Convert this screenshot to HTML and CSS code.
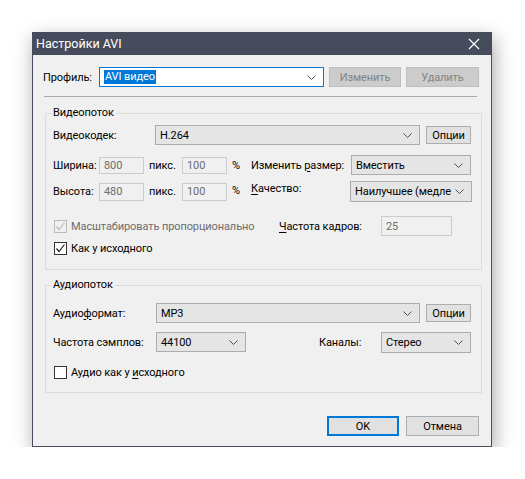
FILE: index.html
```html
<!DOCTYPE html>
<html lang="ru">
<head>
<meta charset="utf-8">
<title>Настройки AVI</title>
<link rel="stylesheet" href="styles.css">
</head>
<body>
<div class="dialog">
  <div class="titlebar">
    <span class="title">Настройки AVI</span>
    <svg class="close" width="12" height="12" viewBox="0 0 12 12"><path d="M1 1L11 11M11 1L1 11" stroke="#fff" stroke-width="1.2" fill="none"/></svg>
  </div>
  <div class="body">
    <div class="row profile-row">
      <span class="lbl w-profile">Профиль:</span>
      <div class="combo edit w-profile-combo"><span class="sel">AVI видео</span><svg class="chev" width="9" height="5" viewBox="0 0 9 5"><path d="M0.5 0.5L4.5 4.5L8.5 0.5" stroke="#505050" fill="none"/></svg></div>
      <button class="btn disabled w72">Изменить</button>
      <button class="btn disabled w73">Удалить</button>
    </div>
    <div class="separator"></div>

    <fieldset class="group video">
      <legend>Видеопоток</legend>
      <div class="row r1">
        <span class="lbl w-codec">Видеокодек:</span>
        <div class="combo w-codec-combo"><span>H.264</span><svg class="chev" width="9" height="5" viewBox="0 0 9 5"><path d="M0.5 0.5L4.5 4.5L8.5 0.5" stroke="#505050" fill="none"/></svg></div>
        <button class="btn opt">Опции</button>
      </div>
      <div class="row r2">
        <span class="lbl w-dim">Ширина:</span>
        <div class="input dis w45 h17">800</div>
        <span class="lbl w-px">пикс.</span>
        <div class="input dis w45 h17">100</div>
        <span class="lbl w-pct">%</span>
        <span class="lbl w-resize">Изменить <u>р</u>азмер:</span>
        <div class="combo w120"><span>Вместить</span><svg class="chev" width="9" height="5" viewBox="0 0 9 5"><path d="M0.5 0.5L4.5 4.5L8.5 0.5" stroke="#505050" fill="none"/></svg></div>
      </div>
      <div class="row r3">
        <span class="lbl w-dim">Высота:</span>
        <div class="input dis w45 h18">480</div>
        <span class="lbl w-px">пикс.</span>
        <div class="input dis w45 h18">100</div>
        <span class="lbl w-pct">%</span>
        <span class="lbl w-resize lbl-up"><u>К</u>ачество:</span>
        <div class="combo w122 h21"><span class="clip">Наилучшее (медленно)</span><svg class="chev" width="9" height="5" viewBox="0 0 9 5"><path d="M0.5 0.5L4.5 4.5L8.5 0.5" stroke="#505050" fill="none"/></svg></div>
      </div>
      <div class="row r4">
        <label class="check w-scale disabled"><span class="box"><svg width="11" height="11" viewBox="0 0 11 11"><path d="M1.5 5.5L4 8.5L9.5 1.5" stroke="#bcbcbc" stroke-width="1.2" fill="none"/></svg></span><span>Масштабировать пропорционально</span></label>
        <span class="lbl w-fps"><u>Ч</u>астота кадров:</span>
        <div class="input dis w71 h20">25</div>
      </div>
      <div class="row r5">
        <label class="check"><span class="box"><svg width="11" height="11" viewBox="0 0 11 11"><path d="M1.5 5.5L4 8.5L9.5 1.5" stroke="#222" stroke-width="1.2" fill="none"/></svg></span><span>Как у исходного</span></label>
      </div>
    </fieldset>

    <fieldset class="group audio">
      <legend>Аудиопоток</legend>
      <div class="row a1">
        <span class="lbl w-afmt">Аудио<u>ф</u>ормат:</span>
        <div class="combo w-afmt-combo"><span>MP3</span><svg class="chev" width="9" height="5" viewBox="0 0 9 5"><path d="M0.5 0.5L4.5 4.5L8.5 0.5" stroke="#505050" fill="none"/></svg></div>
        <button class="btn opt">Опции</button>
      </div>
      <div class="row a2">
        <span class="lbl w-afmt">Частота сэмплов:</span>
        <div class="combo w90 first"><span>44100</span><svg class="chev" width="9" height="5" viewBox="0 0 9 5"><path d="M0.5 0.5L4.5 4.5L8.5 0.5" stroke="#505050" fill="none"/></svg></div>
        <span class="lbl w-chan">Каналы:</span>
        <div class="combo w90 h21"><span>Стерео</span><svg class="chev" width="9" height="5" viewBox="0 0 9 5"><path d="M0.5 0.5L4.5 4.5L8.5 0.5" stroke="#505050" fill="none"/></svg></div>
      </div>
      <div class="row a3">
        <label class="check"><span class="box"></span><span>Аудио как у <u>и</u>сходного</span></label>
      </div>
    </fieldset>

    <div class="footer">
      <button class="btn default w72">OK</button>
      <button class="btn w73">Отмена</button>
    </div>
  </div>
</div>
</body>
</html>
```
FILE: styles.css
```css
* { box-sizing: border-box; }
html, body { margin: 0; padding: 0; background: #ffffff; }
body {
  font-family: Roboto, "Liberation Sans", sans-serif;
  font-size: 11px;
  letter-spacing: -0.1px;
  color: #000;
}
.dialog {
  margin: 32px 0 0 32px;
  width: 460px;
  background: #f0f0f0;
  border: 1px solid #474d5c;
  border-top: none;
  box-shadow: 2px 6px 18px rgba(0,0,0,0.35);
}
.titlebar {
  height: 23px;
  background: #464c5b;
  display: flex;
  align-items: center;
  justify-content: space-between;
  padding: 0 11px 0 3px;
  color: #fff;
}
.title { font-size: 12.5px; line-height: 23px; letter-spacing: 0; }
.close { display: block; }
.body { padding: 12px 11px 10px 10px; }
.row { display: flex; align-items: center; }
.lbl { flex: none; white-space: nowrap; }
u { text-decoration: underline; text-underline-offset: 2px; }

.profile-row { height: 20px; }
.w-profile { width: 56px; }
.w-profile-combo { width: 225px; margin-right: 5px; }
.btn {
  font: inherit;
  letter-spacing: inherit;
  height: 20px;
  padding: 0;
  background: #e1e1e1;
  border: 1px solid #adadad;
  color: #000;
  flex: none;
}
.btn.disabled { background: #cccccc; border-color: #bfbfbf; color: #838383; }
.btn.default { border: 2px solid #0078d7; }
.w72 { width: 72px; }
.w73 { width: 73px; margin-left: 5px; }
.opt { width: 45px; height: 18px; margin-left: 6px; }

.combo {
  flex: none;
  height: 20px;
  display: flex;
  align-items: center;
  justify-content: space-between;
  background: #e5e5e5;
  border: 1px solid #acacac;
  padding: 0 7px 0 4px;
  overflow: hidden;
  white-space: nowrap;
}
.combo.edit { background: #fff; border-color: #0078d7; padding-left: 4px; }
.combo .chev { flex: none; margin-left: 4px; }
.combo .clip { overflow: hidden; flex: 1; min-width: 0; }
.sel { background: #0078d7; color: #fff; line-height: 14px; padding: 0 1px; }
.h21 { height: 21px; }
.w120 { width: 120px; }
.w122 { width: 122px; margin-left: -1px; }
.w90 { width: 90px; }

.input {
  flex: none;
  display: flex;
  align-items: center;
  padding-left: 4px;
  border: 1px solid #cccccc;
  background: #f0f0f0;
}
.input.dis { color: #6d6d6d; }
.w45 { width: 45px; }
.w71 { width: 71px; }
.h17 { height: 17px; }
.h18 { height: 18px; }
.h20 { height: 20px; }

.separator {
  margin: 9px 3px 0 1px;
  border-top: 1px solid #a9a9a9;
}

.group {
  margin: 0 0 0 2px;
  width: 437px;
  border: 1px solid #dcdcdc;
  padding: 0 10px 0 7px;
  min-width: 0;
}
.group legend {
  padding: 0 2px;
  margin-left: -2px;
  line-height: 16px;
}
.video { margin-top: 8px; padding-top: 4px; padding-bottom: 14px; }
.audio { margin-top: 7px; padding-top: 10px; padding-bottom: 13px; }

.w-codec { width: 102px; }
.w-codec-combo { width: 265px; }
.r2 { margin-top: 10px; height: 20px; }
.r3 { margin-top: 6px; height: 21px; }
.w-dim { width: 46px; }
.w-px { width: 38px; padding-left: 5px; }
.w-pct { width: 24px; padding-left: 5px; }
.r3 .w-pct { margin-top: -2px; }
.w-resize { width: 100px; }
.lbl-up { margin-top: -6px; }

.r4 { margin-top: 14px; height: 20px; }
.r5 { margin-top: 5px; height: 14px; }
.check { display: flex; align-items: center; white-space: nowrap; flex: none; }
.check.disabled { color: #6d6d6d; }
.w-scale { width: 226px; }
.box {
  width: 13px; height: 13px;
  border: 1px solid #333333;
  background: #ffffff;
  margin: 0 4px 0 1px;
  display: flex; align-items: center; justify-content: center;
  flex: none;
}
.check.disabled .box { border-color: #bcbcbc; background: #f0f0f0; }
.w-fps { width: 102px; }

.a1 { height: 20px; }
.w-afmt { width: 103px; }
.w-afmt-combo { width: 264px; }
.a2 { margin-top: 9px; height: 21px; }
.a2 .first { height: 20px; align-self: flex-start; }
.w-chan { width: 62px; margin-left: 73px; }
.a3 { margin-top: 12px; height: 14px; }

.footer {
  display: flex;
  justify-content: flex-end;
  margin-top: 23px;
  padding-right: 1px;
}
.footer .w73 { margin-left: 7px; }
```
